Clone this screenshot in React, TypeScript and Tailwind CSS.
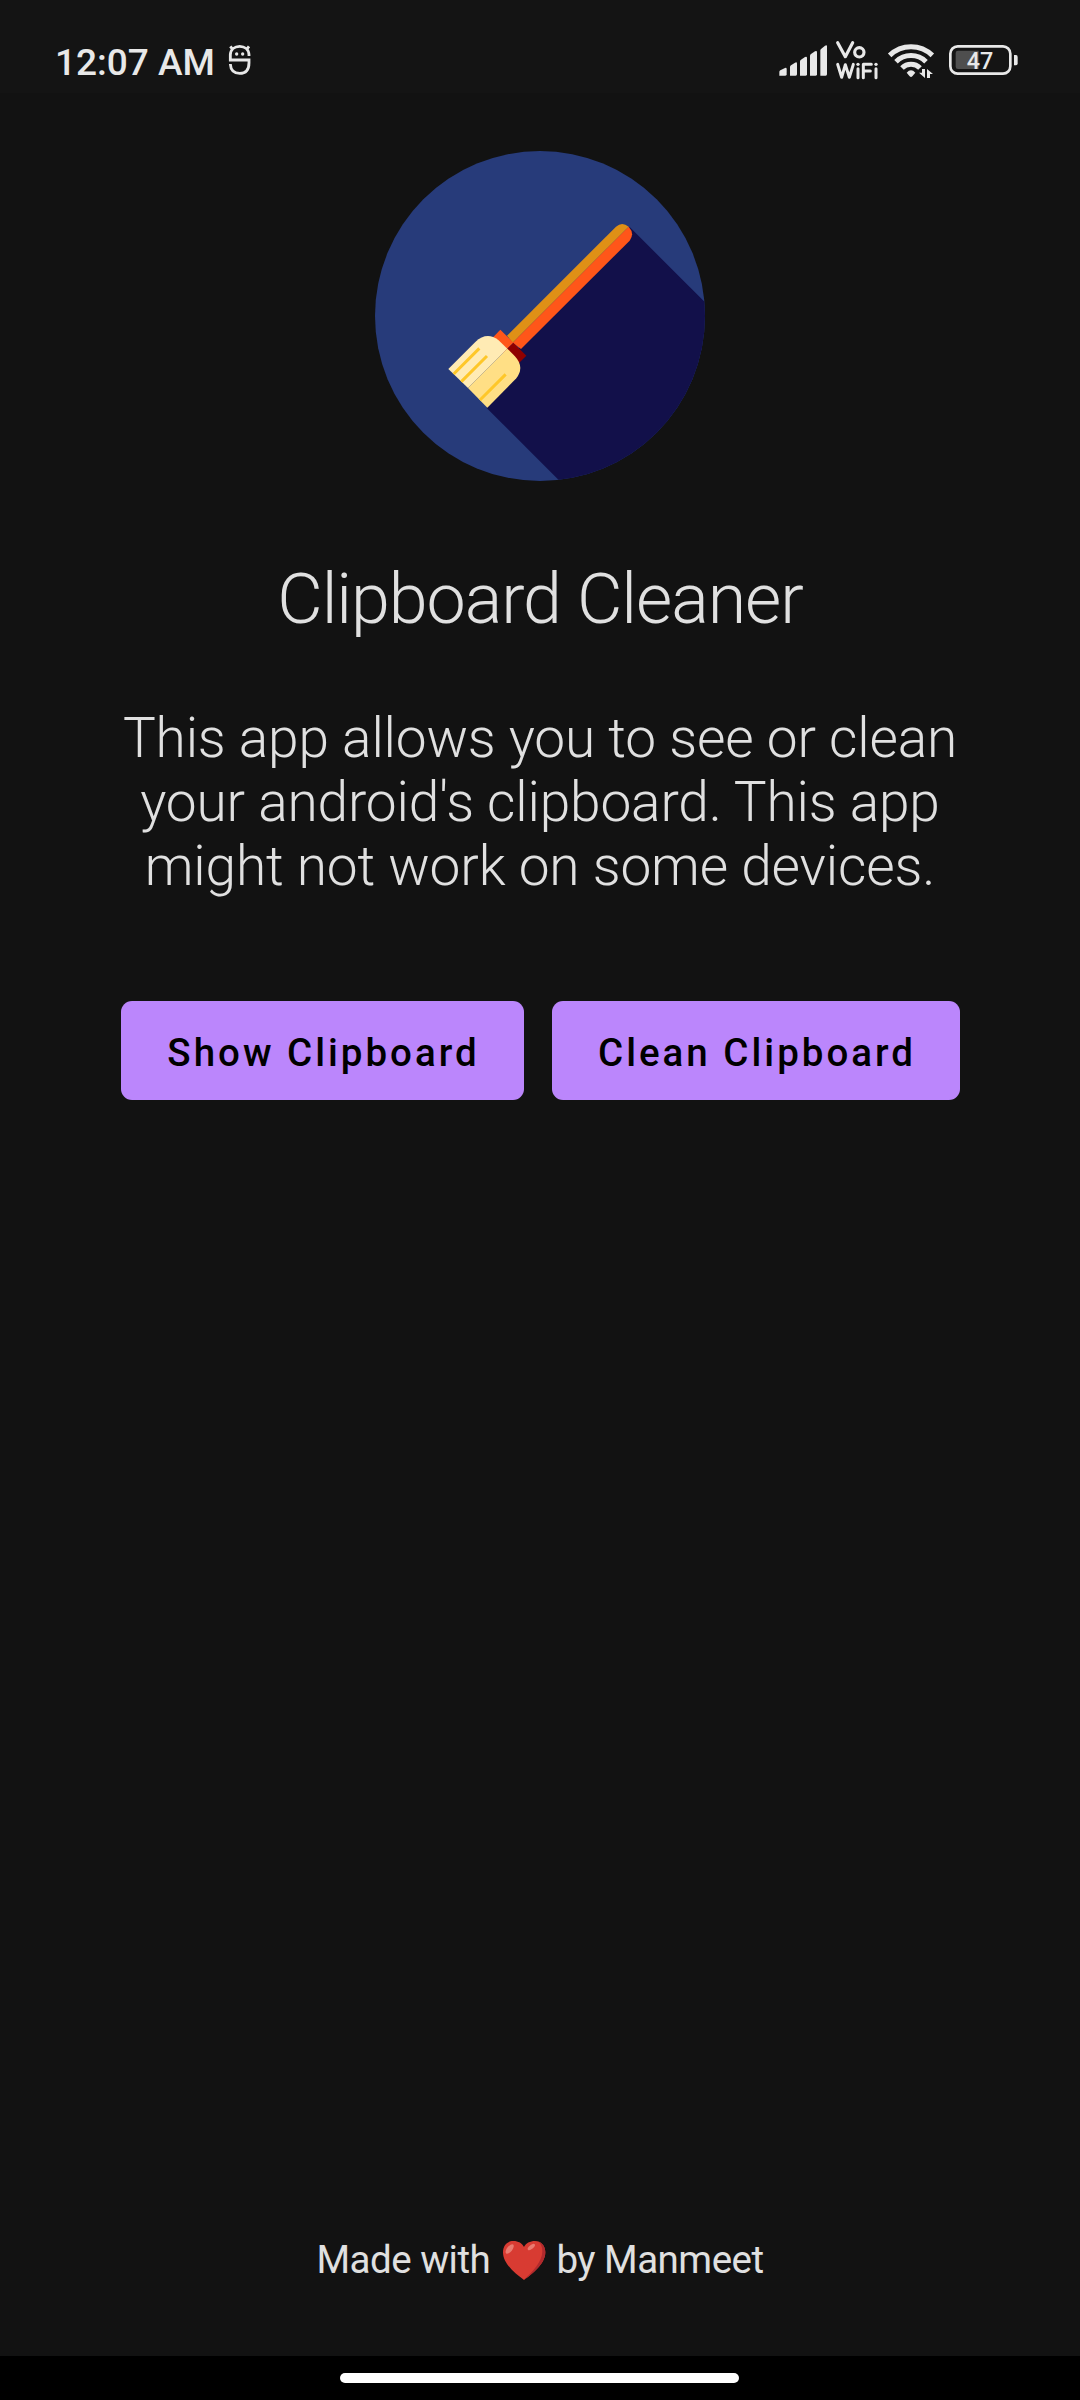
const ink = "#e8e8e8";

function Mascot() {
  return (
    <svg className="ml-[13px] mt-[44px] h-[32px] w-[24px]" viewBox="565 72 72 96" fill="none" stroke={ink} strokeWidth="8.5">
      <path d="M628 108V104C627 88 615 79 600 79S573 88 572 104V120H628V128C628 149 618 160 600 160S573 149 572 132" />
      <path d="M579 88L572 79M621 88L628 79" />
      <circle cx="591" cy="102" r="5" fill={ink} stroke="none" />
      <circle cx="609" cy="102" r="5" fill={ink} stroke="none" />
    </svg>
  );
}

function Signal() {
  return (
    <svg className="h-[90px] w-[280px]" viewBox="0 0 840 270" fill={ink}>
      <path d="M58 167V156Q58 153 61 151L75 144Q80 142 80 147V163Q80 167 76 167Z" />
      <path d="M90 167V141Q90 138 93 136L105 128Q111 125 111 131V163Q111 167 107 167Z" />
      <path d="M120 167V124Q120 121 123 119L135 111Q141 108 141 114V163Q141 167 137 167Z" />
      <path d="M150 167V107Q150 104 153 102L165 94Q171 91 171 97V163Q171 167 167 167Z" />
      <path d="M181 167V91Q181 88 184 86L195 77Q201 73 201 79V163Q201 167 197 167Z" />
      <g fill="none" stroke={ink} strokeWidth="9.5" strokeLinecap="round" strokeLinejoin="round">
        <path d="M233 68L256 110L278 68" />
        <circle cx="298" cy="97" r="14" />
        <path strokeWidth="9" d="M233 133L245 172L256 134L268 172L280 133M294 146V173M310 173V133H334M310 153H331M348 146V173" />
      </g>
      <circle cx="294" cy="133" r="5" />
      <circle cx="348" cy="133" r="5" />
      <g fill="none" stroke={ink} strokeWidth="15">
        <path d="M389 106A92 92 0 0 1 517 106" />
        <path d="M408 125A64 64 0 0 1 498 125" />
        <path d="M426 144A38 38 0 0 1 480 144" />
      </g>
      <path d="M440 158Q453 144 466 158L457 169Q453 173 449 169Z" />
      <path d="M477 158L495 174V147H486V158ZM501 174V147L519 162H510V174Z" />
      <rect x="571" y="79" width="180" height="82" rx="22" fill="none" stroke={ink} strokeWidth="8" />
      <path d="M594 92H656V147H594Q587 147 587 140V99Q587 92 594 92Z" fill="#4e4e4e" />
      <path d="M762 105H768Q773 105 773 111V130Q773 136 768 136H762Z" />
      <text x="660" y="147" textAnchor="middle" fontFamily="Roboto, sans-serif" fontWeight="500" fontSize="70">47</text>
    </svg>
  );
}

function Broom() {
  return (
    <svg className="size-[330px]" viewBox="45 33 990 990">
      <defs>
        <clipPath id="disc">
          <circle cx="540" cy="528" r="495" />
        </clipPath>
      </defs>
      <g clipPath="url(#disc)">
        <rect x="45" y="33" width="990" height="990" fill="#273b7a" />
        <path d="M809 261L1109 561V1100H676L380 804L480 620Z" fill="#12104a" />
        <path d="M441 587L768 260Q786 244 806 260L458 608Z" fill="#df9016" />
        <path d="M806 260Q825 281 809 302L483 627L458 608Z" fill="#ff5619" />
        <path d="M421 569L460 608L430 638L392 599Z" fill="#ff5619" />
        <path d="M460 608L499 647L470 676L430 638Z" fill="#900000" />
        <path d="M265 687L346 606Q380 574 415 600L442 626L324 744Z" fill="#ffebb4" />
        <path d="M442 626L464 648Q495 681 469 715L382 803L324 744Z" fill="#ffdf85" />
        <path d="M281 702L358 625M304 725L381 648M360 780L437 703" stroke="#fec729" strokeWidth="9" />
      </g>
    </svg>
  );
}

function Heart() {
  return (
    <svg className="ml-[3px] mr-[1px] h-[40px] w-[44px]" viewBox="606 88 132 120">
      <path d="M672 208C650 192 609 161 609 125C609 104 623 91 640 91C655 91 667 98 672 109C677 98 690 91 705 91C723 91 736 105 736 125C736 161 694 192 672 208Z" fill="#d83b32" />
      <path d="M716 93C729 98 736 110 736 125C736 161 694 192 672 208C699 182 727 153 727 122C727 109 723 99 716 93Z" fill="#b02a2d" />
      <ellipse cx="629" cy="115" rx="8" ry="17" transform="rotate(38 629 115)" fill="#e97b70" />
      <ellipse cx="694" cy="109" rx="6" ry="13" transform="rotate(52 694 109)" fill="#e97b70" />
    </svg>
  );
}

export default function App() {
  return (
    <div className="flex h-[2400px] w-[1080px] flex-col bg-[#121212] font-['Roboto',sans-serif] text-[#e0e0e0]">
      <header className="flex h-[93px] items-start justify-between bg-[#141414] pl-[55px]">
        <div className="flex text-[#e8e8e8]">
          <span className="mt-[41px] whitespace-nowrap text-[37px] font-medium leading-[44px]">12:07 AM</span>
          <Mascot />
        </div>
        <div className="mr-[40px] mt-[20px] h-[73px]">
          <Signal />
        </div>
      </header>
      <main className="flex flex-1 flex-col items-center pt-[58px]">
        <Broom />
        <h1 className="mt-[77px] whitespace-nowrap text-[70px] font-light leading-[82px] tracking-[-1.05px]">Clipboard Cleaner</h1>
        <p className="mt-[66px] whitespace-nowrap text-center text-[55px] font-light leading-[64px] tracking-[-0.16px]">
          This app allows you to see or clean
          <br />
          your android's clipboard. This app
          <br />
          might not work on some devices.
        </p>
        <div className="mt-[103px] flex gap-[28px] text-[38.5px] font-medium tracking-[3px] text-black">
          <button className="h-[99px] w-[403px] whitespace-nowrap rounded-[11px] bg-[#bb86fc] pl-[3px] pt-[4px]">Show Clipboard</button>
          <button className="h-[99px] w-[408px] whitespace-nowrap rounded-[11px] bg-[#bb86fc] pl-[3px] pt-[4px]">Clean Clipboard</button>
        </div>
        <p className="mb-[73px] mt-auto flex items-center whitespace-pre text-[38.5px] leading-[46px] tracking-[-0.5px]">
          <span>Made with </span>
          <Heart />
          <span> by Manmeet</span>
        </p>
      </main>
      <footer className="flex h-[44px] justify-center bg-black pr-px pt-[17px]">
        <div className="h-[10px] w-[399px] rounded-full bg-white" />
      </footer>
    </div>
  );
}
